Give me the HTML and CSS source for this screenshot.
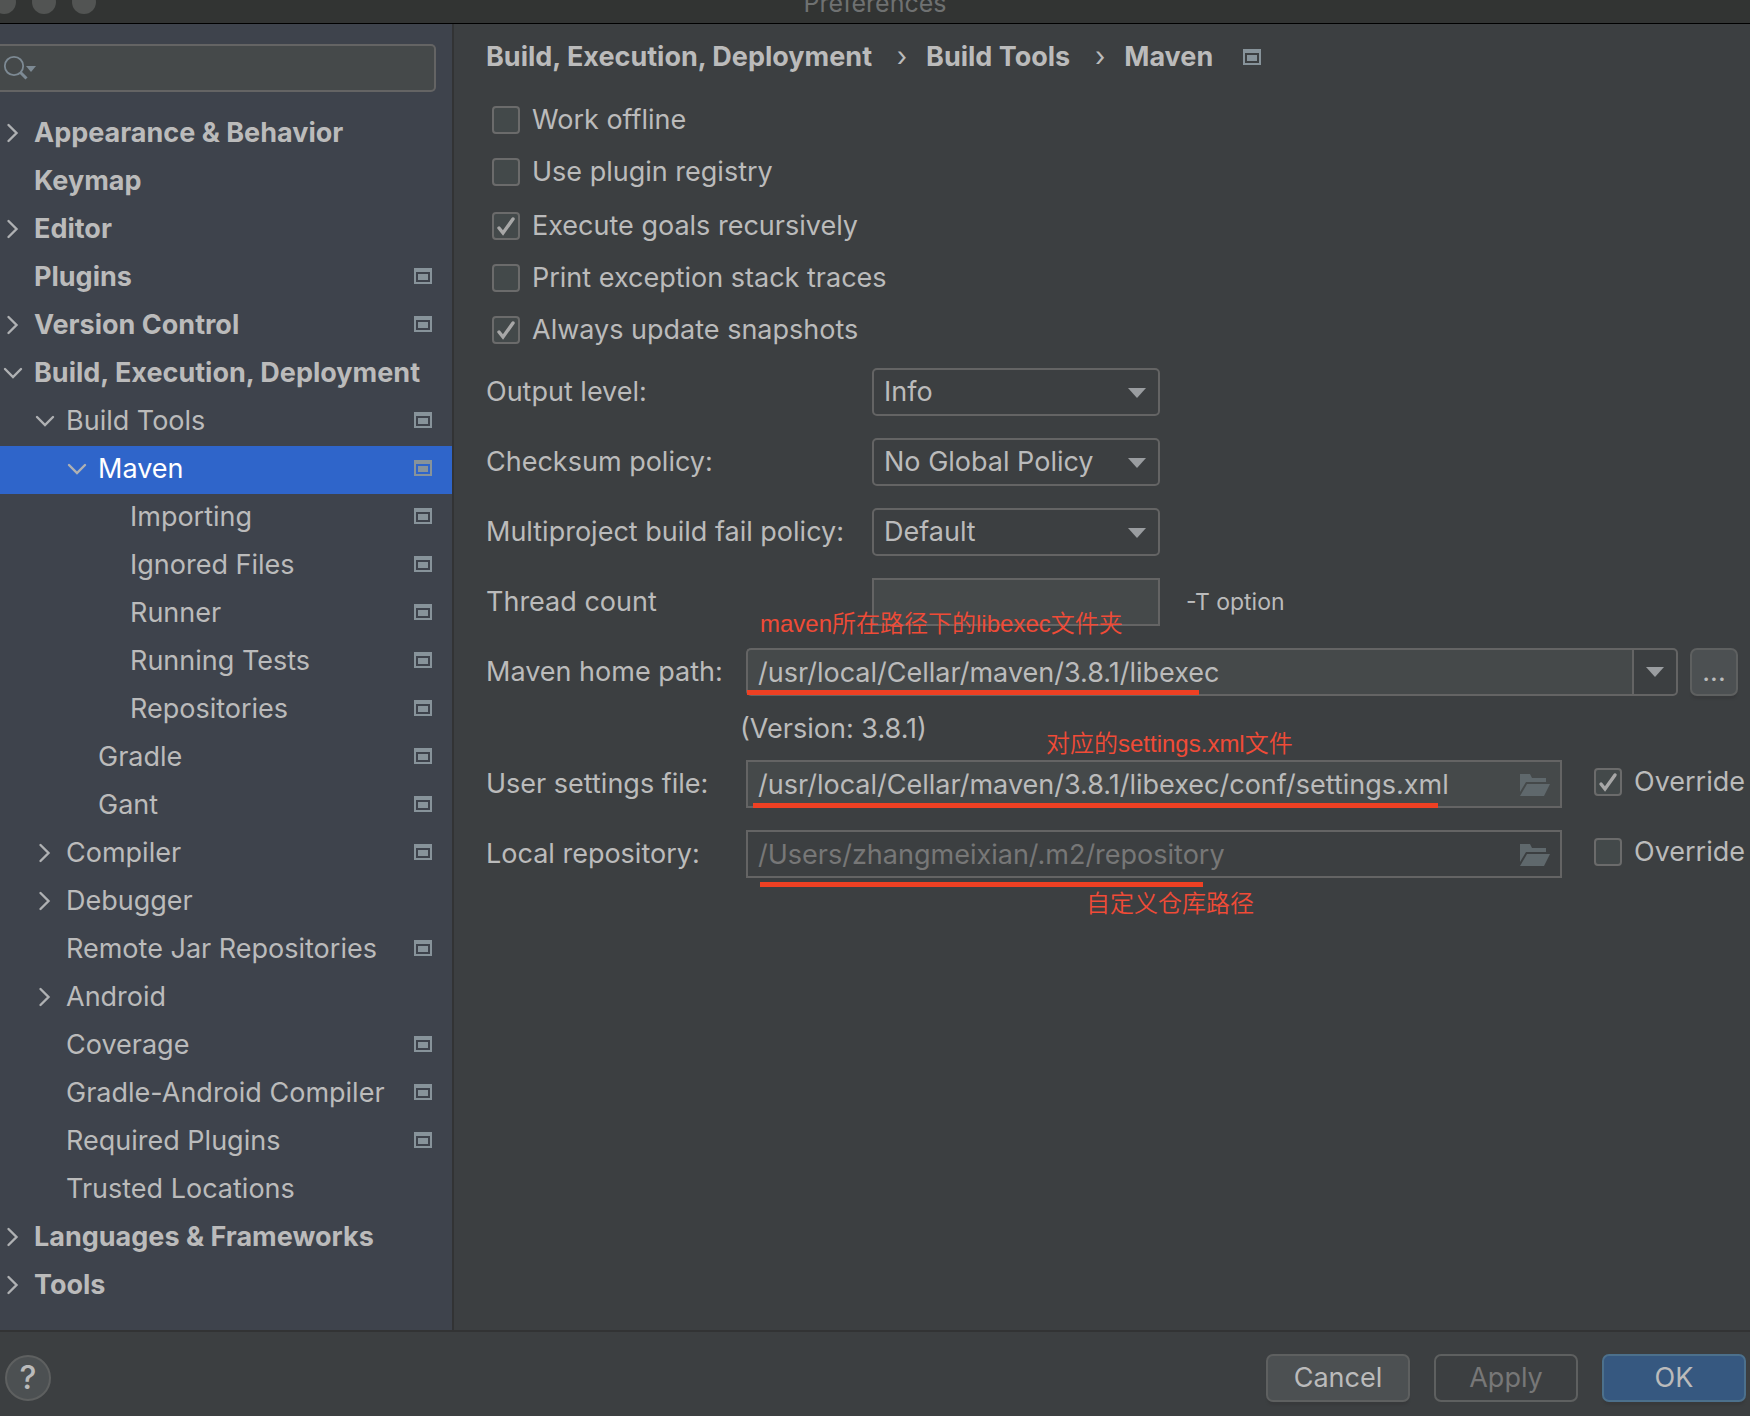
FILE: index.html
```html
<!DOCTYPE html>
<html lang="en">
<head>
<meta charset="utf-8">
<title>Preferences</title>
<link rel="stylesheet" href="styles.css">
</head>
<body>
<svg class="sprite" aria-hidden="true">
  <symbol id="right" viewBox="0 0 24 24"><path d="M8.500 4l8 8-8 8" fill="none" stroke="#afb1b3" stroke-width="2.4" stroke-linecap="round"/></symbol>
  <symbol id="down" viewBox="0 0 24 24"><path d="M5 8l8 8 8-8" fill="none" stroke="#afb1b3" stroke-width="2.4" stroke-linecap="round"/></symbol>
  <symbol id="project" viewBox="0 0 18 16"><path d="M0 0h18v16H0zM2 4v10h14V4z" fill-rule="evenodd"/><path d="M4 6h10v6H4z"/></symbol>
  <symbol id="arrow" viewBox="0 0 18 10"><path d="M0 0h18L9 10z" fill="#9a9da0"/></symbol>
  <symbol id="folder" viewBox="0 0 30 22"><path d="M0 0h10l2 4h14v4H6L0 18z"/><path d="M7 10h23l-6 12H0z"/></symbol>
</svg>

<header class="titlebar">
  <div class="lights"><i></i><i></i><i></i></div>
  <h1>Preferences</h1>
</header>

<div class="main">
  <aside class="sidebar">
    <div class="search">
      <svg width="34" height="26" viewBox="0 0 34 26" fill="none"><circle cx="12" cy="11" r="9.2" stroke="#7d8a94" stroke-width="1.8"/><path d="M18.500 17.500l6 6" stroke="#7d8a94" stroke-width="3"/><path d="M24 11h10l-5 6z" fill="#7d8a94"/></svg>
      <input type="text" aria-label="Search settings">
    </div>
    <ul class="tree">
      <li class="top"><svg class="toggle"><use href="#right"/></svg><span>Appearance &amp; Behavior</span></li>
      <li class="top"><i class="toggle"></i><span>Keymap</span></li>
      <li class="top"><svg class="toggle"><use href="#right"/></svg><span>Editor</span></li>
      <li class="top"><i class="toggle"></i><span>Plugins</span><svg class="project"><use href="#project"/></svg></li>
      <li class="top"><svg class="toggle"><use href="#right"/></svg><span>Version Control</span><svg class="project"><use href="#project"/></svg></li>
      <li class="top"><svg class="toggle"><use href="#down"/></svg><span>Build, Execution, Deployment</span></li>
      <li class="l1"><svg class="toggle"><use href="#down"/></svg><span>Build Tools</span><svg class="project"><use href="#project"/></svg></li>
      <li class="l2 selected"><svg class="toggle"><use href="#down"/></svg><span>Maven</span><svg class="project"><use href="#project"/></svg></li>
      <li class="l3"><i class="toggle"></i><span>Importing</span><svg class="project"><use href="#project"/></svg></li>
      <li class="l3"><i class="toggle"></i><span>Ignored Files</span><svg class="project"><use href="#project"/></svg></li>
      <li class="l3"><i class="toggle"></i><span>Runner</span><svg class="project"><use href="#project"/></svg></li>
      <li class="l3"><i class="toggle"></i><span>Running Tests</span><svg class="project"><use href="#project"/></svg></li>
      <li class="l3"><i class="toggle"></i><span>Repositories</span><svg class="project"><use href="#project"/></svg></li>
      <li class="l2"><i class="toggle"></i><span>Gradle</span><svg class="project"><use href="#project"/></svg></li>
      <li class="l2"><i class="toggle"></i><span>Gant</span><svg class="project"><use href="#project"/></svg></li>
      <li class="l1"><svg class="toggle"><use href="#right"/></svg><span>Compiler</span><svg class="project"><use href="#project"/></svg></li>
      <li class="l1"><svg class="toggle"><use href="#right"/></svg><span>Debugger</span></li>
      <li class="l1"><i class="toggle"></i><span>Remote Jar Repositories</span><svg class="project"><use href="#project"/></svg></li>
      <li class="l1"><svg class="toggle"><use href="#right"/></svg><span>Android</span></li>
      <li class="l1"><i class="toggle"></i><span>Coverage</span><svg class="project"><use href="#project"/></svg></li>
      <li class="l1"><i class="toggle"></i><span>Gradle-Android Compiler</span><svg class="project"><use href="#project"/></svg></li>
      <li class="l1"><i class="toggle"></i><span>Required Plugins</span><svg class="project"><use href="#project"/></svg></li>
      <li class="l1"><i class="toggle"></i><span>Trusted Locations</span></li>
      <li class="top"><svg class="toggle"><use href="#right"/></svg><span>Languages &amp; Frameworks</span></li>
      <li class="top"><svg class="toggle"><use href="#right"/></svg><span>Tools</span></li>
    </ul>
  </aside>

  <main class="content">
    <nav class="crumbs">
      <span>Build, Execution, Deployment</span><b>›</b><span>Build Tools</span><b>›</b><span>Maven</span>
      <svg class="project"><use href="#project"/></svg>
    </nav>

    <div class="options">
      <div class="group">
        <label class="check"><input type="checkbox">Work offline</label>
        <label class="check"><input type="checkbox">Use plugin registry</label>
      </div>
      <div class="group">
        <label class="check"><input type="checkbox" checked>Execute goals recursively</label>
        <label class="check"><input type="checkbox">Print exception stack traces</label>
        <label class="check"><input type="checkbox" checked>Always update snapshots</label>
      </div>
    </div>

    <form class="fields">
      <div class="row wide">
        <label for="level">Output level:</label>
        <div class="select"><select id="level"><option>Info</option></select><svg><use href="#arrow"/></svg></div>
      </div>
      <div class="row wide">
        <label for="checksum">Checksum policy:</label>
        <div class="select"><select id="checksum"><option>No Global Policy</option></select><svg><use href="#arrow"/></svg></div>
      </div>
      <div class="row wide">
        <label for="fail">Multiproject build fail policy:</label>
        <div class="select"><select id="fail"><option>Default</option></select><svg><use href="#arrow"/></svg></div>
      </div>
      <div class="row wide">
        <label for="threads">Thread count</label>
        <input class="box threads" id="threads" type="text">
        <span class="hint">-T option</span>
        <span class="note note-home">maven所在路径下的libexec文件夹</span>
      </div>
      <div class="row">
        <label for="home">Maven home path:</label>
        <div class="combo">
          <input class="box" id="home" type="text" value="/usr/local/Cellar/maven/3.8.1/libexec">
          <button type="button" aria-label="Show paths"><svg><use href="#arrow"/></svg></button>
        </div>
        <button type="button" class="btn browse">...</button>
        <span class="line line-home"></span>
      </div>
      <p class="version">(Version: 3.8.1)<span class="note note-settings">对应的settings.xml文件</span></p>
      <div class="row">
        <label for="settings">User settings file:</label>
        <div class="file"><input class="box" id="settings" type="text" value="/usr/local/Cellar/maven/3.8.1/libexec/conf/settings.xml"><svg><use href="#folder"/></svg></div>
        <label class="check override"><input type="checkbox" checked>Override</label>
        <span class="line line-settings"></span>
      </div>
      <div class="row">
        <label for="repo">Local repository:</label>
        <div class="file"><input class="box" id="repo" type="text" value="/Users/zhangmeixian/.m2/repository" disabled><svg><use href="#folder"/></svg></div>
        <label class="check override"><input type="checkbox">Override</label>
        <span class="line line-repo"></span>
        <span class="note note-repo">自定义仓库路径</span>
      </div>
    </form>
  </main>
</div>

<footer class="footer">
  <button type="button" class="help" aria-label="Help">?</button>
  <button type="button" class="btn">Cancel</button>
  <button type="button" class="btn apply" disabled>Apply</button>
  <button type="button" class="btn ok">OK</button>
</footer>
</body>
</html>
```
FILE: styles.css
```css
* { box-sizing: border-box; }
body {
  margin: 0;
  min-height: 100vh;
  display: flex;
  flex-direction: column;
  background: #3c3f41;
  color: #bbbbbb;
  font: 27px/32px Inter, "Noto Sans CJK SC", sans-serif;
}
input, select, button { font: inherit; color: inherit; margin: 0; }
.sprite { position: absolute; width: 0; height: 0; }

.titlebar {
  position: relative;
  height: 24px;
  overflow: hidden;
  background: #323433;
  border-bottom: 1px solid #000;
  display: flex;
  justify-content: center;
  align-items: flex-end;
}
.titlebar h1 { margin: 0 0 4px; font-size: 25px; font-weight: 400; line-height: 32px; color: #6f7171; }
.lights { position: absolute; left: -8px; bottom: 9px; display: flex; gap: 16px; }
.lights i { width: 24px; height: 24px; border-radius: 50%; background: #525453; }

.main { flex: 1; display: flex; }
.sidebar {
  flex: none;
  width: 454px;
  padding-top: 20px;
  background: #3e434c;
  border-right: 2px solid #323334;
}
.search {
  display: flex;
  align-items: center;
  height: 48px;
  margin-right: 16px;
  background: #45494a;
  border: 2px solid #646464;
  border-left: 0;
  border-radius: 0 5px 5px 0;
}
.search svg { flex: none; margin-left: 2px; }
.search input { flex: 1; min-width: 0; border: 0; background: none; outline: 0; }

.tree { list-style: none; margin: 18px 0 0; padding: 0; }
.tree li { display: flex; align-items: center; height: 48px; padding: 0 20px 2px 0; white-space: nowrap; }
.tree .top { font-weight: 700; }
.tree .l1 { padding-left: 32px; }
.tree .l2 { padding-left: 64px; }
.tree .l3 { padding-left: 96px; }
.tree .selected { background: #2f65ca; color: #fff; }
.toggle { flex: none; width: 24px; height: 24px; margin-right: 10px; }
.project { flex: none; width: 18px; height: 16px; fill: #87939a; }
.tree .project { margin: 0 0 2px auto; }

.content { flex: 1; min-width: 0; padding: 17px 6px 20px 32px; }
.crumbs { display: flex; align-items: center; font-weight: 700; white-space: nowrap; }
.crumbs b { width: 54px; padding-left: 6px; text-align: center; font-weight: 400; }
.crumbs .project { margin-left: 30px; }

.options { display: flex; flex-direction: column; gap: 22px; margin: 31px 0 22px 6px; }
.group { display: flex; flex-direction: column; gap: 20px; }
.check { display: flex; align-items: center; gap: 12px; }
.check input {
  appearance: none;
  flex: none;
  width: 28px;
  height: 28px;
  border: 2px solid #6b6b6b;
  border-radius: 4px;
  background: #43494a;
}
.check input:checked {
  background: #43494a url("data:image/svg+xml,%3Csvg xmlns='http://www.w3.org/2000/svg' viewBox='0 0 24 24'%3E%3Cpath d='M5 14l4 5L19 5' fill='none' stroke='%23a7a7a7' stroke-width='3.4' stroke-linecap='round'/%3E%3C/svg%3E") center / 24px 24px;
}

.fields { display: flex; flex-direction: column; gap: 22px; }
.row { position: relative; display: flex; align-items: center; height: 48px; white-space: nowrap; }
.row > label:first-child { flex: none; width: 260px; }
.row.wide > label:first-child { width: 386px; }
.box {
  width: 100%;
  height: 48px;
  padding: 0 10px;
  border: 2px solid #646464;
  border-radius: 0;
  background: #45494a;
  outline: 0;
}
.box:disabled { background: #3c3f41; color: #777777; }
.select { position: relative; width: 288px; }
.select select {
  appearance: none;
  width: 100%;
  height: 48px;
  padding: 0 10px;
  border: 2px solid #646464;
  border-radius: 5px;
  background: #3c3f41;
}
.select svg { position: absolute; right: 14px; top: 20px; width: 18px; height: 10px; pointer-events: none; }
.threads { width: 288px; }
.hint { margin-left: 26px; font-size: 23px; }
.combo { flex: 1; display: flex; margin-right: 12px; }
.combo .box { flex: 1; min-width: 0; border-radius: 5px 0 0 5px; border-right: 0; }
.combo button {
  flex: none;
  width: 46px;
  height: 48px;
  padding: 0;
  display: grid;
  place-items: center;
  border: 2px solid #646464;
  border-radius: 0 5px 5px 0;
  background: #3c3f41;
}
.combo svg { width: 18px; height: 10px; }
.file { position: relative; flex: 1; }
.file .box { display: block; padding-right: 40px; }
.file svg { position: absolute; right: 12px; top: 14px; width: 30px; height: 22px; fill: #5f686c; }
.override { flex: none; width: 150px; margin: 0 0 4px 32px; }
.version { position: relative; margin: 0 0 0 254px; padding: 1px 0; height: 20px; line-height: 20px; }

.btn {
  width: 144px;
  height: 48px;
  padding: 0;
  border: 2px solid #5e6060;
  border-radius: 7px;
  background: #4c5052;
  box-shadow: 0 4px 2px -1px #383a3c;
}
.btn.apply { background: none; color: #777777; box-shadow: none; }
.btn.ok { background: #365880; border-color: #4c708c; }
.browse { flex: none; width: 48px; margin-right: 6px; }

.note, .line { position: absolute; color: #f04b37; white-space: nowrap; }
.note { font: 350 24px/32px "Liberation Sans", "Noto Sans CJK SC", sans-serif; }
.line { height: 5px; background: #ee4023; }
.note-home { left: 274px; top: 30px; }
.note-settings { left: 306px; top: 10px; }
.note-repo { left: 600px; top: 58px; }
.line-home { left: 261px; top: 42px; width: 452px; }
.line-settings { left: 267px; top: 43px; width: 685px; }
.line-repo { left: 274px; top: 52px; width: 443px; }

.footer {
  display: flex;
  align-items: center;
  gap: 24px;
  padding: 22px 4px 14px 5px;
  border-top: 2px solid #323334;
}
.help {
  width: 46px;
  height: 46px;
  margin-right: auto;
  padding: 0;
  border: 2px solid #5e6060;
  border-radius: 50%;
  background: #4c5052;
  font-size: 32px;
  font-weight: 500;
}
```
